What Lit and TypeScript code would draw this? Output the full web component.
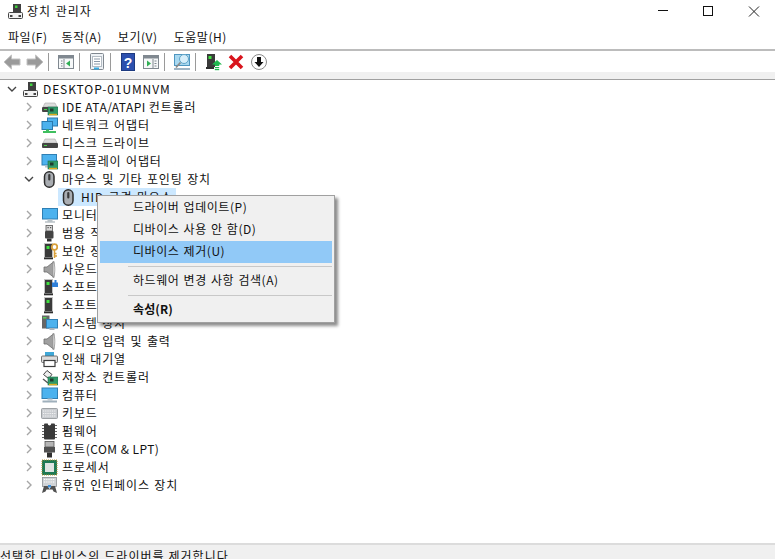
import { LitElement, html, css, svg } from "lit";
import { customElement } from "lit/decorators.js";

const comp = svg`<rect x="6" y="1" width="8" height="9" fill="#3f3f3f"/><rect x="8" y="2.500" width="2.500" height="2.500" fill="#3fd23f"/><rect x="1.500" y="9.500" width="14" height="6" rx="1" fill="#f2f2f2" stroke="#444"/><rect x="3" y="12" width="2.500" height="2" fill="#444"/><rect x="11.500" y="12" width="2.500" height="2" fill="#444"/>`;
const board = svg`<rect x="7" y="8" width="10" height="8" fill="#2f9a6a" stroke="#1d6b48" stroke-width=".6"/><rect x="9" y="9.500" width="3.500" height="3" fill="#1e3c2e"/><path d="M8 15.500h8" stroke="#e0ad20" stroke-width="1.400"/>`;
const disk = svg`<path d="M2 8l2-4h10l2 4z" fill="#dcdcdc" stroke="#a8a8a8" stroke-width=".6"/><rect x="1" y="8" width="16" height="5" rx="1" fill="#454545"/><rect x="3" y="10" width="3" height="1" fill="#49d24a"/>`;
const mon = svg`<rect x="1.500" y="1.500" width="15" height="10.500" fill="#4cb2ee" stroke="#2f7fb4"/><rect x="6.500" y="12.500" width="5" height="2" fill="#b8c2c8"/><rect x="4" y="14.500" width="10" height="1" fill="#98a4ac"/>`;
const mouse = svg`<rect x="3.500" y="0.800" width="9.500" height="15.400" rx="4.700" fill="#a9adb2" stroke="#2d2d2d" stroke-width="1.500"/><rect x="7.200" y="3" width="2.200" height="6.500" rx="1.100" fill="#3a3a3a"/>`;
const tower = svg`<rect x="3.500" y="0.500" width="8" height="14" fill="#3a3a3a" stroke="#c4c4c4"/><rect x="5.500" y="3" width="3" height="3" fill="#3fe03f"/><rect x="3" y="14.500" width="9" height="1.800" fill="#2e2e2e"/>`;
const speaker = svg`<path d="M3 6h3l7-5.500v16L6 11H3z" fill="#a0a0a0" stroke="#6d6d6d" stroke-width=".8"/><path d="M12 .5c2.500 3 2.500 13 0 16z" fill="#e2e2e2" stroke="#8a8a8a" stroke-width=".6"/>`;

const icons: Record<string, unknown> = {
  comp,
  ide: svg`${disk}${board}`,
  net: svg`<rect x="6.500" y="1" width="10" height="8" fill="#4cb2ee" stroke="#2a79ad"/><rect x="1" y="4.500" width="10.500" height="8" fill="#4cb2ee" stroke="#2a79ad"/><path d="M2 15h13" stroke="#3fbf5f" stroke-width="2"/><rect x="5" y="12.500" width="3" height="2" fill="#3fbf5f"/>`,
  disk,
  disp: svg`<rect x="1" y="1.500" width="14.500" height="10.500" fill="#4cb2ee" stroke="#2f7fb4"/><rect x="4" y="12.500" width="4" height="2" fill="#b8c2c8"/>${board}`,
  mouse,
  mon,
  usb: svg`<rect x="5" y="0.500" width="6.500" height="5.500" fill="#d8d8d8" stroke="#555" stroke-width=".8"/><rect x="6.500" y="2" width="1.200" height="1.200" fill="#555"/><rect x="9" y="2" width="1.200" height="1.200" fill="#555"/><rect x="4" y="6" width="8.500" height="7.500" rx="1" fill="#444"/><rect x="6" y="13.500" width="4.500" height="3" fill="#303030"/>`,
  sec: svg`${tower}<circle cx="13.500" cy="4" r="2.800" fill="none" stroke="#d9a03a" stroke-width="1.800"/><path d="M13.500 6.500V15M13.500 13h2.500M13.500 10.500h2" stroke="#d9a03a" stroke-width="1.500"/>`,
  speaker,
  soft1: svg`${tower}<path d="M11 3.500h2.500V1h2v2.500H17V8h-6z" fill="#2f7fd8"/>`,
  soft2: tower,
  sys: svg`<rect x="1" y="0.500" width="7.500" height="13" fill="#666"/><rect x="2" y="2" width="3.500" height="1.500" fill="#5ad05a"/><rect x="5.500" y="4.500" width="11" height="8.500" fill="#4cb2ee" stroke="#2f7fb4"/><rect x="8.500" y="13" width="5" height="2" fill="#aab4bc"/>`,
  print: svg`<rect x="4" y="1" width="9" height="4" fill="#3fa8d8"/><rect x="0.500" y="5" width="16" height="6.500" rx="1" fill="#dcdcdc" stroke="#555" stroke-width=".8"/><rect x="3" y="9.500" width="11" height="6" fill="#fff" stroke="#3c3c3c" stroke-width="1.200"/>`,
  stor: svg`<path d="M6 1.500l-3.500 4 5 4 3.500-4z" fill="#eee" stroke="#444"/><path d="M2 10l5 4" stroke="#555" stroke-width="1.500"/>${board}`,
  pc: svg`<rect x="1" y="1" width="15.500" height="10.500" fill="#4cb2ee" stroke="#2f7fb4"/><rect x="6.500" y="11.500" width="5" height="2" fill="#c4cdd3"/><rect x="1.500" y="13.500" width="14.500" height="2" fill="#9fb0bc"/>`,
  kb: svg`<rect x="0.500" y="3.500" width="16" height="10" rx="1" fill="#c9ccd0" stroke="#8c9094" stroke-width=".8"/><path d="M2 6h13M2 8.500h13M2 11h13" stroke="#f4f4f4" stroke-width="1.200" stroke-dasharray="1 .8"/>`,
  chip: svg`<rect x="3" y="0.500" width="11" height="16" rx="1" fill="#3a3a3a"/><circle cx="8.500" cy="0.800" r="1.700" fill="#fff"/><path d="M1 2.500h2M1 5.500h2M1 8.500h2M1 11.500h2M1 14.500h2M14 2.500h2M14 5.500h2M14 8.500h2M14 11.500h2M14 14.500h2" stroke="#666"/>`,
  port: svg`<rect x="4" y="0.500" width="9" height="5.500" fill="#b5b5b5" stroke="#555" stroke-width=".8"/><rect x="3" y="6" width="11" height="5.500" fill="#505050"/><rect x="6" y="11.500" width="5" height="5" fill="#303030"/>`,
  cpu: svg`<rect x="1" y="1" width="15" height="15" fill="#1f7a55" stroke="#b89030" stroke-dasharray="1 1"/><rect x="4" y="4" width="9" height="9" fill="#dfe4e2"/>`,
  hid: svg`<rect x="1.500" y="0.500" width="14" height="9" fill="#d0d3d6" stroke="#8c9094" stroke-width=".8"/><path d="M3 2.500h11M3 5h11" stroke="#fff" stroke-width="1.200" stroke-dasharray="1 .8"/><path d="M1 16l2-7h3.500l2 3 2-3H14l2 7-3.500-1.500-1-2H5.500l-1 2z" fill="#505050"/><rect x="7" y="8" width="3" height="2.500" fill="#3f8fd8"/>`,
};

const rows: [string, string, boolean?][] = [
  ["ide", "IDE ATA/ATAPI 컨트롤러"],
  ["net", "네트워크 어댑터"],
  ["disk", "디스크 드라이브"],
  ["disp", "디스플레이 어댑터"],
  ["mouse", "마우스 및 기타 포인팅 장치", true],
];
const rows2: [string, string][] = [
  ["mon", "모니터"],
  ["usb", "범용 직렬 버스 컨트롤러"],
  ["sec", "보안 장치"],
  ["speaker", "사운드, 비디오 및 게임 컨트롤러"],
  ["soft1", "소프트웨어 구성 요소"],
  ["soft2", "소프트웨어 장치"],
  ["sys", "시스템 장치"],
  ["speaker", "오디오 입력 및 출력"],
  ["print", "인쇄 대기열"],
  ["stor", "저장소 컨트롤러"],
  ["pc", "컴퓨터"],
  ["kb", "키보드"],
  ["chip", "펌웨어"],
  ["port", "포트(COM & LPT)"],
  ["cpu", "프로세서"],
  ["hid", "휴먼 인터페이스 장치"],
];

const ic = (k: string) => html`<svg class="ic" viewBox="0 0 17 17" width="17" height="17">${icons[k]}</svg>`;
const chev = (open: boolean) =>
  html`<svg class="chev" viewBox="0 0 10 10" width="10" height="10"><path d=${open ? "M1 3l4 4 4-4" : "M3 1l4 4-4 4"} fill="none" stroke=${open ? "#444" : "#a6a6a6"} stroke-width="1.400"/></svg>`;
const label = (t: string) => {
  const m = t.match(/^(.*?)((?:IDE ATA\/ATAPI )|(?:\(COM & LPT\)))(.*)$/);
  return m ? html`<span>${m[1]}<span class="lat">${m[2]}</span>${m[3]}</span>` : html`<span>${t}</span>`;
};

const tb = (body: unknown) => html`<span class="btn"><svg viewBox="0 0 18 18" width="18" height="18">${body}</svg></span>`;
const sep = html`<span class="sep"></span>`;
const win = (arrow: unknown) => svg`<rect x="1.500" y="2.500" width="15" height="13" fill="#f6f8f9" stroke="#808890"/><rect x="2" y="3" width="14" height="2.500" fill="#808890"/>${arrow}`;

@customElement("app-root")
export class AppRoot extends LitElement {
  static styles = css`
    :host { display: flex; flex-direction: column; width: 775px; height: 559px; overflow: hidden; position: relative; background: #fff; font: 12px/18px "Noto Sans CJK KR", "Open Sans", sans-serif; color: #111; }
    .title { height: 22px; padding-left: 7px; display: flex; align-items: center; gap: 3px; flex: none; }
    .title span { flex: 1; font-size: 12px; letter-spacing: 1px; word-spacing: 1px; }
    .winbtns { display: flex; }
    .winbtns svg { display: block; margin-left: 30px; }
    .winbtns svg:last-child { margin-right: 13px; }
    .menu { height: 24px; margin-top: 3px; display: flex; gap: 16px; padding-left: 8px; align-items: center; flex: none; letter-spacing: .55px; }
    .menu span:first-child { margin-right: -2px; }
    .toolbar { height: 21px; border-top: 2px solid #bcbcbc; display: flex; align-items: center; flex: none; }
    .btn { width: 23px; height: 18px; display: flex; justify-content: center; flex: none; }
    .btn svg { display: block; }
    .sep { width: 1px; height: 18px; background: #9a9a9a; margin: 0 5px 0 2px; flex: none; }
    .band { height: 7px; background: #f0f0f0; border-bottom: 1px solid #a0a0a0; flex: none; }
    .tree { flex: 1; }
    .row { height: 18px; display: flex; align-items: center; white-space: nowrap; letter-spacing: .85px; word-spacing: 1px; }
    .lat { letter-spacing: .45px; word-spacing: 0; }
    .chev { flex: none; }
    .ic { flex: none; display: block; }
    .root { padding-left: 7px; letter-spacing: .9px; }
    .root .chev { margin-right: 5px; }
    .root .ic { margin-right: 4px; }
    .l1 { padding-left: 24px; }
    .l1 .chev { margin-right: 7px; }
    .l1 .ic { margin-right: 4px; }
    .l2 { margin-left: 58px; width: 116px; background: #cce8ff; padding-left: 2px; }
    .l2 .ic { margin-right: 4px; }
    .status { height: 14px; border-top: 2px solid #dcdcdc; background: #f0f0f0; flex: none; line-height: 22px; letter-spacing: 1.05px; white-space: nowrap; }
    .ctx { position: absolute; left: 97px; top: 195px; width: 232px; background: #f0f0f0; border: 1px solid #a0a0a0; box-shadow: 3px 3px 3px rgba(0,0,0,.45); padding: 1px 2px; }
    .mi { height: 22px; line-height: 20px; padding-left: 33px; letter-spacing: .55px; word-spacing: 1px; }
    .mi.hot { background: #91c9f7; }
    .mi.b { font-weight: 700; letter-spacing: .1px; }
    .msep { height: 1px; background: #c8c8c8; margin: 3px 0 3px 28px; }
  `;

  row(k: string, t: string, open = false) {
    return html`<div class="row l1">${chev(open)}${ic(k)}${label(t)}</div>`;
  }

  render() {
    return html`
      <div class="title">${ic("comp")}<span>장치 관리자</span>
        <div class="winbtns">
          <svg width="16" height="10" viewBox="0 0 16 10"><path d="M4 5.500h10" stroke="#111"/></svg>
          <svg width="16" height="12" viewBox="0 0 16 12"><rect x="3.500" y="1.500" width="9" height="9" fill="none" stroke="#111"/></svg>
          <svg width="16" height="12" viewBox="0 0 16 12"><path d="M3 1.500l10 10M13 1.500l-10 10" stroke="#222"/></svg>
        </div>
      </div>
      <div class="menu"><span>파일(F)</span><span>동작(A)</span><span>보기(V)</span><span>도움말(H)</span></div>
      <div class="toolbar">
        ${tb(svg`<path d="M1 9l7.500-7v4h8.500v6H8.500v4z" fill="#9a9a9a" stroke="#c2c2c2"/>`)}
        ${tb(svg`<path d="M17 9L9.500 2v4H1v6h8.500v4z" fill="#9a9a9a" stroke="#c2c2c2"/>`)}
        ${sep}
        ${tb(win(svg`<path d="M7 6v9" stroke="#808890"/><path d="M4 8h1.500M4 10.500h1.500M4 13h1.500" stroke="#808890"/><path d="M13 7.500l-4 3 4 3z" fill="#2fae54"/>`))}
        ${sep}
        ${tb(svg`<rect x="2.500" y="0.500" width="13" height="16" rx="1" fill="#eef2f6" stroke="#808890"/><rect x="4.500" y="3.500" width="9" height="10" fill="#fff" stroke="#b4bcc4"/><path d="M6 6h6M6 8.500h6M6 11h6" stroke="#8a98a8"/><rect x="6" y="14.500" width="5" height="2" fill="#35a8e0"/>`)}
        ${sep}
        ${tb(svg`<rect x="2.500" y="0.500" width="13" height="17" fill="#2c50ae" stroke="#1d3a80"/><text x="9" y="14.500" font-size="14" font-weight="700" text-anchor="middle" fill="#fff" font-family="Liberation Sans">?</text>`)}
        ${tb(win(svg`<path d="M11 6v9" stroke="#808890"/><path d="M12.500 8h2M12.500 10.500h2M12.500 13h2" stroke="#808890"/><path d="M5 7.500l4 3-4 3z" fill="#2fae54"/>`))}
        ${sep}
        ${tb(svg`<rect x="1.500" y="1.500" width="15" height="11" fill="#a8d8f0" stroke="#4f96c0"/><circle cx="11" cy="6" r="4.500" fill="#d6eefa" stroke="#5fa4c8"/><path d="M7.500 9.500L3 14.500" stroke="#8a8a8a" stroke-width="1.800"/><path d="M1 16h16" stroke="#7f9bb0" stroke-width="1.500"/>`)}
        ${sep}
        ${tb(svg`<rect x="3" y="1" width="8" height="13" fill="#3a3a3a"/><rect x="4.500" y="3" width="3" height="3" fill="#3fe03f"/><rect x="2" y="14" width="8" height="2" fill="#2e2e2e"/><path d="M13 7l-5 4.500h2.800v1.500h4.400v-1.500H18z" fill="#1fb84f"/><rect x="10.800" y="14" width="4.400" height="1.200" fill="#1fb84f"/><rect x="10.800" y="16" width="4.400" height="1.200" fill="#1fb84f"/>`)}
        ${tb(svg`<path d="M3 3l12 12M15 3L3 15" stroke="#d8141c" stroke-width="3.600"/>`)}
        ${tb(svg`<circle cx="9" cy="9" r="7.500" fill="#fff" stroke="#8a8a8a"/><path d="M7 4h4v5h2.500L9 14 4.500 9H7z" fill="#111"/>`)}
      </div>
      <div class="band"></div>
      <div class="tree">
        <div class="row root">${chev(true)}${ic("comp")}<span>DESKTOP-01UMNVM</span></div>
        ${rows.map(([k, t, o]) => this.row(k, t, !!o))}
        <div class="row l2">${ic("mouse")}<span>HID 규격 마우스</span></div>
        ${rows2.map(([k, t]) => this.row(k, t))}
      </div>
      <div class="status">선택한 디바이스의 드라이버를 제거합니다</div>
      <div class="ctx">
        <div class="mi">드라이버 업데이트(P)</div>
        <div class="mi">디바이스 사용 안 함(D)</div>
        <div class="mi hot">디바이스 제거(U)</div>
        <div class="msep"></div>
        <div class="mi">하드웨어 변경 사항 검색(A)</div>
        <div class="msep"></div>
        <div class="mi b">속성(R)</div>
      </div>
    `;
  }
}
